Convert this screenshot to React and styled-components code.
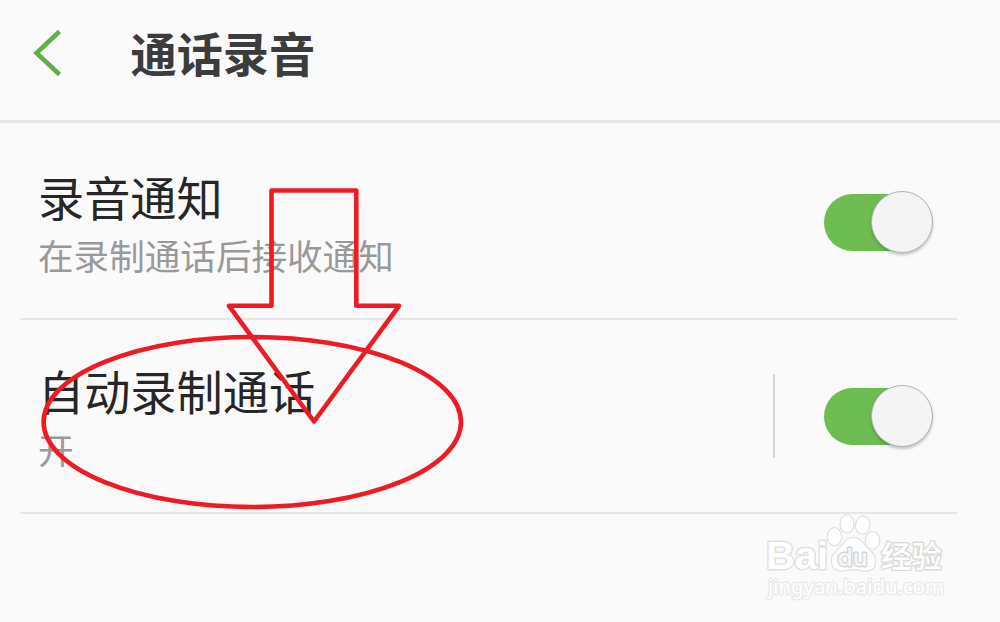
import React from "react";
import styled, { createGlobalStyle } from "styled-components";

const GlobalStyle = createGlobalStyle`
  * { box-sizing: border-box; }
  body {
    margin: 0;
    background: #fafafa;
    font-family: "Noto Sans CJK SC", "Noto Sans", sans-serif;
  }
`;

const Screen = styled.div`
  position: relative;
  width: 1000px;
  height: 622px;
  overflow: hidden;
  background: #fafafa;
`;

const Header = styled.header`
  display: flex;
  align-items: flex-start;
  height: 123px;
  padding: 22px 0 0 30px;
  border-bottom: 3px solid #e6e6e6;
`;

const BackButton = styled.button`
  width: 40px;
  height: 60px;
  padding: 0;
  border: 0;
  background: none;
  svg { display: block; }
`;

const Title = styled.h1`
  margin: 0 0 0 60.5px;
  font-size: 46.2px;
  line-height: 60px;
  font-weight: 700;
  color: #3c3c3c;
`;

const List = styled.main`
  padding: 3px 43px 0 20px;
`;

const Row = styled.section`
  display: flex;
  justify-content: space-between;
  height: 194px;
  padding: 40px 24px 0 18px;
  border-bottom: 2px solid #e6e6e6;
`;

const RowTitle = styled.h2`
  margin: 0;
  font-size: 46.2px;
  line-height: 60px;
  font-weight: 400;
  color: #262626;
`;

const RowNote = styled.p`
  margin: 5px 0 0;
  font-size: 35.6px;
  line-height: 48px;
  color: #999;
`;

const Control = styled.div`
  display: flex;
  align-items: center;
  height: 84px;
  margin-top: 14px;
  padding-left: 49px;
  border-left: 2px solid ${(p) => (p.$divided ? "#d4d4d4" : "transparent")};
`;

const Track = styled.div`
  display: flex;
  align-items: center;
  justify-content: flex-end;
  width: 109px;
  height: 57px;
  background: linear-gradient(#6dbd53, #6dbd53) left / 80px 57px no-repeat;
  border-radius: 29px;
`;

const Knob = styled.div`
  flex: none;
  width: 62px;
  height: 62px;
  border: 1px solid #b2b2b2;
  border-radius: 50%;
  background: #f4f4f4;
  box-shadow: 0 2px 3px rgba(0, 0, 0, 0.22);
`;

const Overlay = styled.svg`
  position: absolute;
  inset: 0;
  pointer-events: none;
`;

function Toggle() {
  return (
    <Track role="switch" aria-checked="true">
      <Knob />
    </Track>
  );
}

function SettingRow({ title, note, divided }) {
  return (
    <Row>
      <div>
        <RowTitle>{title}</RowTitle>
        <RowNote>{note}</RowNote>
      </div>
      <Control $divided={divided}>
        <Toggle />
      </Control>
    </Row>
  );
}

function Watermark() {
  return (
    <g fill="#fff" stroke="#e0e0e0" strokeWidth="2.8" strokeLinejoin="round" paintOrder="stroke">
      <text x="766" y="569" fontFamily="Liberation Sans, sans-serif" fontWeight="700" fontSize="38" textLength="62" lengthAdjust="spacingAndGlyphs">Bai</text>
      <ellipse cx="834.5" cy="536.7" rx="6.6" ry="8.4" strokeWidth="2.4" />
      <ellipse cx="847" cy="524" rx="6.4" ry="8.4" strokeWidth="2.4" />
      <ellipse cx="862.7" cy="525.2" rx="6.6" ry="8.4" transform="rotate(8 862.7 525.2)" strokeWidth="2.4" />
      <ellipse cx="872.5" cy="540.5" rx="6.6" ry="8.4" strokeWidth="2.4" />
      <path d="M853 538C848 538 845 542 841 547C837 551.5 832 554 832 561C832 567 835.5 570.5 841 570.5C846 570.5 848 569 853.5 569C859 569 861 570.5 866 570.5C872 570.5 875 567 875 561C875 554 870 551.5 866 547C861.5 541.5 859 538 853 538Z" strokeWidth="2.4" />
      <text x="837.5" y="566" fontFamily="Inter, sans-serif" fontWeight="500" fontSize="24" textLength="30" lengthAdjust="spacingAndGlyphs" fill="#f7f7f7" stroke="#d4d4d4">du</text>
      <text x="881" y="567" fontFamily="Noto Sans CJK SC, sans-serif" fontWeight="500" fontSize="30" textLength="61" lengthAdjust="spacingAndGlyphs" stroke="#dadada">经验</text>
      <text x="768" y="594" fontFamily="Noto Sans, sans-serif" fontWeight="400" fontSize="20" textLength="176" lengthAdjust="spacingAndGlyphs" stroke="#ebebeb">jingyan.baidu.com</text>
    </g>
  );
}

export default function App() {
  return (
    <>
      <GlobalStyle />
      <Screen>
        <Header>
          <BackButton aria-label="返回">
            <svg width="40" height="60" viewBox="0 0 40 60" fill="none">
              <path d="M29.5 9.5L6.5 31L29.5 52.5" stroke="#61ad48" strokeWidth="4.5" />
            </svg>
          </BackButton>
          <Title>通话录音</Title>
        </Header>
        <List>
          <SettingRow title="录音通知" note="在录制通话后接收通知" />
          <SettingRow title="自动录制通话" note="开" divided />
        </List>
        <Overlay width="1000" height="622" viewBox="0 0 1000 622">
          <Watermark />
          <g fill="none" stroke="#ed1c24" strokeWidth="4.6" strokeLinejoin="round">
            <path d="M271.5 190.5H356.3V305.8H399L314 421.5L229 305.8H271.5Z" />
            <ellipse cx="252.3" cy="422" rx="208.7" ry="85" />
          </g>
        </Overlay>
      </Screen>
    </>
  );
}
